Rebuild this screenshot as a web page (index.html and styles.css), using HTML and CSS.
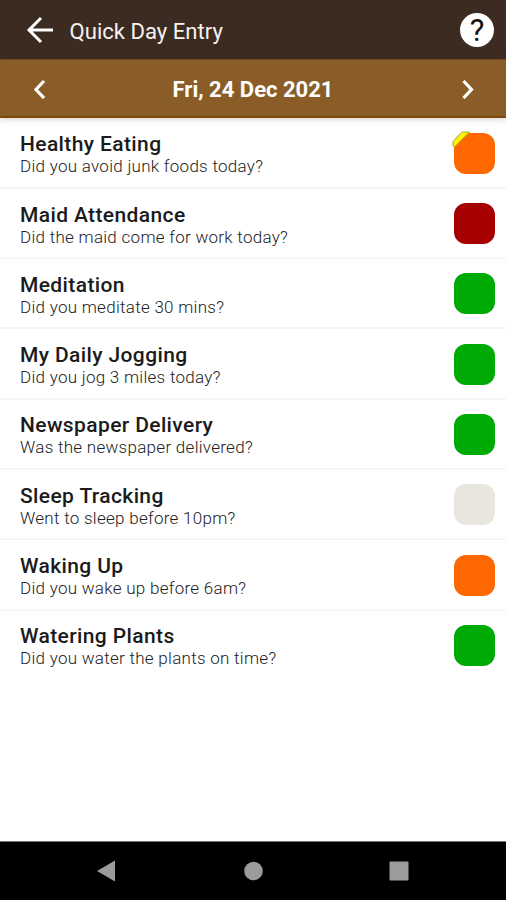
FILE: index.html
```html
<!DOCTYPE html>
<html lang="en">
<head>
<meta charset="utf-8">
<title>Quick Day Entry</title>
<link rel="stylesheet" href="styles.css">
</head>
<body>
<header class="app-bar">
  <svg class="back" viewBox="0 0 30 30"><path d="M28 15H4M16 3L4 15L16 27"/></svg>
  <h1 class="title">Quick Day Entry</h1>
  <span class="help">?</span>
</header>
<nav class="date-bar">
  <svg class="chevron" viewBox="0 0 14 20"><path d="M11 2L3 10.500L11 19"/></svg>
  <span class="date">Fri, 24 Dec 2021</span>
  <svg class="chevron" viewBox="0 0 14 20"><path d="M2.500 2L10.500 10.500L2.500 19"/></svg>
</nav>
<main class="list">
  <section class="row"><div class="text"><h2 class="name">Healthy Eating</h2><p class="question">Did you avoid junk foods today?</p></div><span class="status orange"><svg class="note" viewBox="0 0 18 18"><path d="M1 15V10.500L9.500 1.500Q10 1 11 1H17.500L2.500 16Z"/></svg></span></section>
  <section class="row"><div class="text"><h2 class="name">Maid Attendance</h2><p class="question">Did the maid come for work today?</p></div><span class="status red"></span></section>
  <section class="row"><div class="text"><h2 class="name">Meditation</h2><p class="question">Did you meditate 30 mins?</p></div><span class="status green"></span></section>
  <section class="row"><div class="text"><h2 class="name">My Daily Jogging</h2><p class="question">Did you jog 3 miles today?</p></div><span class="status green"></span></section>
  <section class="row"><div class="text"><h2 class="name">Newspaper Delivery</h2><p class="question">Was the newspaper delivered?</p></div><span class="status green"></span></section>
  <section class="row"><div class="text"><h2 class="name">Sleep Tracking</h2><p class="question">Went to sleep before 10pm?</p></div><span class="status empty"></span></section>
  <section class="row"><div class="text"><h2 class="name">Waking Up</h2><p class="question">Did you wake up before 6am?</p></div><span class="status orange"></span></section>
  <section class="row"><div class="text"><h2 class="name">Watering Plants</h2><p class="question">Did you water the plants on time?</p></div><span class="status green"></span></section>
</main>
<footer class="system-bar">
  <svg viewBox="0 0 22 22"><path d="M2 11L20 0.500V21.500Z"/></svg>
  <svg viewBox="0 0 22 22"><circle cx="11.500" cy="11" r="9.300"/></svg>
  <svg viewBox="0 0 22 22"><rect x="1.500" y="1.500" width="19" height="19" rx="1"/></svg>
</footer>
</body>
</html>
```
FILE: styles.css
```css
* { box-sizing: border-box; }
body {
  margin: 0;
  height: 900px;
  display: flex;
  flex-direction: column;
  overflow: hidden;
  background: #fff;
  font-family: Roboto, sans-serif;
}
h1, h2, p { margin: 0; }
.app-bar {
  height: 59px;
  flex: none;
  display: flex;
  align-items: center;
  padding: 1px 12px 0 25px;
  background: #3c2b20;
  color: #f5f2f0;
}
.back { width: 30px; height: 30px; fill: none; stroke: #fff; stroke-width: 3; }
.title { margin-left: 14.500px; padding-top: 1px; font-size: 22.100px; font-weight: 400; line-height: 30px; }
.help {
  width: 34px;
  height: 34px;
  margin-left: auto;
  border-radius: 50%;
  background: #fff;
  color: #17100c;
  font-size: 31px;
  font-weight: 400;
  line-height: 35px;
  text-align: center;
}
.date-bar {
  height: 59px;
  flex: none;
  display: flex;
  align-items: center;
  justify-content: space-between;
  padding: 2px 31px 0 33px;
  border-top: 1px solid #70451f;
  border-bottom: 2px solid #80480f;
  background: #8a5d28;
  color: #fff;
  box-shadow: 0 1px 6px rgba(70, 60, 30, .25);
}
.chevron { width: 14px; height: 20px; fill: none; stroke: #fff; stroke-width: 3.2; }
.date { margin-left: -2px; padding-top: 2px; font-size: 22px; font-weight: 700; line-height: 30px; }
.list { flex: 1; padding-top: .6px; }
.row {
  height: 70.300px;
  display: flex;
  align-items: center;
  justify-content: space-between;
  padding: 1px 11px 0 20px;
  border-bottom: 2px solid #f6f6f6;
}
.row:last-child { border-bottom-color: transparent; }
.text { padding-top: 3px; }
.name { color: #1b1b1b; font-size: 21px; font-weight: 500; line-height: 24px; letter-spacing: .38px; }
.question { color: #222; font-size: 17px; font-weight: 300; line-height: 21px; letter-spacing: .28px; }
.status { position: relative; width: 41px; height: 41px; border-radius: 12px; }
.orange { background: #ff6800; }
.red { background: #a60000; }
.green { background: #00aa05; }
.empty { background: #e9e6e0; }
.note { position: absolute; left: -2px; top: -2px; width: 18px; height: 18px; fill: #fff500; stroke: #a09a20; stroke-width: .9; }
.system-bar {
  height: 59px;
  flex: none;
  display: flex;
  align-items: center;
  justify-content: space-between;
  padding: 0 96px 0 95px;
  border-top: 1px solid #777;
  background: #000;
}
.system-bar svg { width: 22px; height: 22px; fill: #9b9b9b; }
```
